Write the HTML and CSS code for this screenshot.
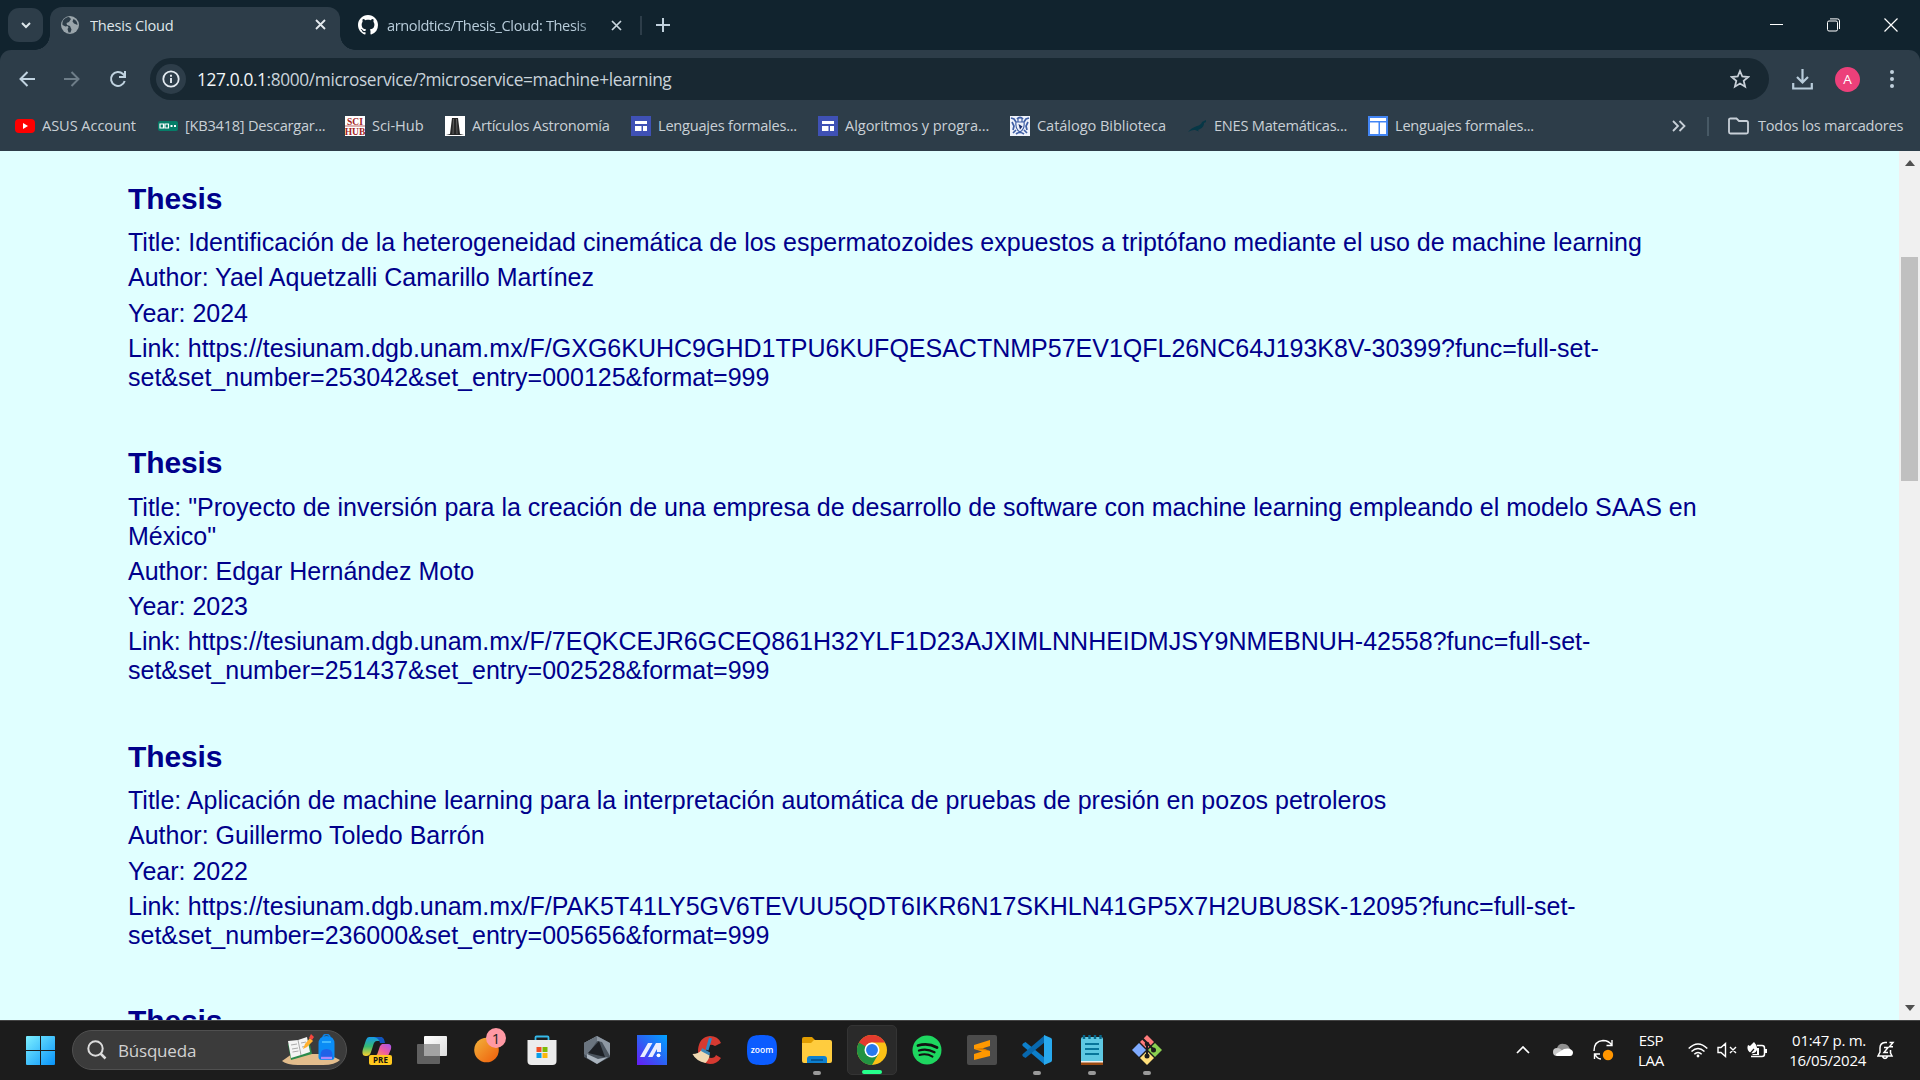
FILE: index.html
```
<!DOCTYPE html>
<html lang="es">
<head>
<meta charset="utf-8">
<title>Thesis Cloud</title>
<link rel="stylesheet" href="styles.css">
</head>
<body>
<div class="screen">
  <header class="browser">
    <div class="tabstrip">
      <button class="tab-search" aria-label="Buscar pestañas"><svg width="12" height="10" viewBox="0 0 12 10"><path d="M2 3l4 4 4-4" fill="none" stroke="#dde6ea" stroke-width="2"/></svg></button>
      <div class="tab active">
        <svg width="18" height="18" viewBox="0 0 18 18"><circle cx="9" cy="9" r="9" fill="#9aa5ab"/><path d="M8 1C3 1.500 1 5 1.500 9l3 1.500 2-.5 1 1.500-1 1.500 1 3.500h2l1-3-1.500-3.500-3-1-.5-2 2.500-1 2-3zM12.500 3l-1 2.500 1.500 2 3.500 1.500c0-3-1.500-5-4-6z" fill="#2d3d49"/></svg>
        <span class="tab-title t1">Thesis Cloud</span>
        <svg class="tab-close" width="11" height="11" viewBox="0 0 11 11"><path d="M1 1l9 9M10 1l-9 9" stroke="#e4eaee" stroke-width="1.800"/></svg>
      </div>
      <div class="tab idle">
        <svg width="20" height="20" viewBox="0 0 16 16"><path fill="#fff" d="M8 0C3.580 0 0 3.580 0 8c0 3.540 2.290 6.530 5.470 7.590.4.070.55-.17.55-.38 0-.19-.01-.82-.01-1.490-2.010.37-2.530-.49-2.690-.94-.09-.23-.48-.94-.82-1.130-.28-.15-.68-.52-.01-.53.63-.01 1.080.58 1.230.82.72 1.210 1.870.87 2.330.66.070-.52.28-.87.51-1.070-1.780-.2-3.640-.89-3.640-3.950 0-.87.31-1.590.82-2.150-.08-.2-.36-1.020.08-2.120 0 0 .67-.21 2.200.82.64-.18 1.320-.27 2-.27s1.360.09 2 .27c1.530-1.040 2.200-.82 2.200-.82.44 1.100.16 1.920.08 2.120.51.56.82 1.270.82 2.150 0 3.070-1.870 3.750-3.650 3.950.29.25.54.73.54 1.480 0 1.070-.01 1.930-.01 2.200 0 .21.15.46.55.38A8 8 0 0 0 16 8c0-4.420-3.580-8-8-8z"/></svg>
        <span class="tab-title t2">arnoldtics/Thesis_Cloud: Thesis</span>
        <svg class="tab-close" width="11" height="11" viewBox="0 0 11 11"><path d="M1 1l9 9M10 1l-9 9" stroke="#c9d6de" stroke-width="1.700"/></svg>
      </div>
      <span class="tab-sep"></span>
      <svg class="new-tab" width="14" height="14" viewBox="0 0 14 14"><path d="M7 0v14M0 7h14" stroke="#c0d0dc" stroke-width="2"/></svg>
      <div class="window-controls">
        <svg width="14" height="14" viewBox="0 0 14 14"><path d="M0 6.500h13" stroke="#fff"/></svg>
        <svg width="14" height="14" viewBox="0 0 14 14" fill="none" stroke="#fff"><rect x=".5" y="3" width="10" height="10" rx="1.500"/><path d="M3 .9h7.500q2 0 2 2V11"/></svg>
        <svg width="14" height="14" viewBox="0 0 14 14"><path d="M.5.5l13 13M13.500.5l-13 13" stroke="#fff" stroke-width="1.200"/></svg>
      </div>
    </div>
    <div class="panel">
      <div class="toolbar">
        <svg class="nav" width="16" height="16" viewBox="0 0 16 16" fill="none" stroke="#c0d3e0" stroke-width="2"><path d="M16 8H2M8.500 1L1.500 8l7 7"/></svg>
        <svg class="nav" width="16" height="16" viewBox="0 0 16 16" fill="none" stroke="#6d7d88" stroke-width="2"><path d="M0 8h14M7.500 1l7 7-7 7"/></svg>
        <svg class="nav" width="18" height="18" viewBox="0 0 18 18" fill="none" stroke="#c0d3e0" stroke-width="2"><path d="M15.700 11A7 7 0 1 1 14 4l2 2"/><path d="M16 1v6h-6"/></svg>
        <div class="omnibox">
          <span class="info"><svg width="18" height="18" viewBox="0 0 18 18"><circle cx="9" cy="9" r="7.700" fill="none" stroke="#e3eaf0" stroke-width="1.800"/><path d="M9 8v5M9 4.800v1.900" stroke="#e3eaf0" stroke-width="1.900"/></svg></span>
          <span class="url"><b>127.0.0.1</b>:8000/microservice/?microservice=machine+learning</span>
          <svg class="star" width="20" height="20" viewBox="0 0 20 20"><path d="M10 2l2.300 5.500 5.900.5-4.500 3.900 1.400 5.800L10 14.600l-5.100 3.100 1.400-5.800L1.800 8l5.900-.5z" fill="none" stroke="#c8d0d8" stroke-width="1.800"/></svg>
        </div>
        <svg class="download" width="21" height="21" viewBox="0 0 21 21" fill="none" stroke="#b8ccda" stroke-width="2.200"><path d="M10.500 0v13M5 8l5.500 5.500L16 8M1.200 14v5.500h18.600V14"/></svg>
        <span class="avatar">A</span>
        <svg class="dots" width="4" height="18" viewBox="0 0 4 18" fill="#c0d0dc"><circle cx="2" cy="2" r="2"/><circle cx="2" cy="9" r="2"/><circle cx="2" cy="16" r="2"/></svg>
      </div>
      <nav class="bookmarks">
        <span class="bm"><svg width="20" height="20" viewBox="0 0 20 20"><rect y="3" width="20" height="14" rx="4" fill="#f00"/><path d="M8 7l5 3-5 3z" fill="#fff"/></svg><em class="loose">ASUS Account</em></span>
        <span class="bm"><svg width="20" height="20" viewBox="0 0 20 20"><rect y="5" width="20" height="10" rx="2" fill="#067d68"/><path d="M2 8h3.500v4H2zM7 8h3.500v4H7z" fill="none" stroke="#fff" stroke-width="1.200"/><path d="M12.500 9h2v2h-2zM16 9h2v2h-2z" fill="#fff"/></svg><em>[KB3418] Descargar...</em></span>
        <span class="bm"><svg width="20" height="20" viewBox="0 0 20 20"><rect width="20" height="20" fill="#fff"/><path d="M0 10h20" stroke="#b66" /><text x="10" y="8.500" class="sci">SCI</text><text x="10" y="19" class="sci">HUB</text></svg><em class="loose">Sci-Hub</em></span>
        <span class="bm"><svg width="20" height="20" viewBox="0 0 20 20"><rect width="20" height="20" fill="#fff"/><path d="M1 19h18l-4-1-2-16H7L5 18z" fill="#262626"/><path d="M8.500 3L8 18M11.500 3l.5 15" stroke="#777" stroke-width=".7"/></svg><em>Artículos Astronomía</em></span>
        <span class="bm"><svg width="20" height="20" viewBox="0 0 20 20"><rect width="20" height="20" fill="#3f51b5"/><path d="M4 5h12v3H4zM4 10h6.500v5H4zM12 10h4v5h-4z" fill="#fff"/></svg><em>Lenguajes formales...</em></span>
        <span class="bm"><svg width="20" height="20" viewBox="0 0 20 20"><rect width="20" height="20" fill="#3f51b5"/><path d="M4 5h12v3H4zM4 10h6.500v5H4zM12 10h4v5h-4z" fill="#fff"/></svg><em class="loose">Algoritmos y progra...</em></span>
        <span class="bm"><svg width="20" height="20" viewBox="0 0 20 20"><rect width="20" height="20" fill="#eef2fa"/><g fill="none" stroke="#3f5fa5"><path d="M1 2l3 1 2 3M19 2l-3 1-2 3M7 3q3-3 6 0M2 6l2 4-1 4M18 6l-2 4 1 4M3 17l3-3M17 17l-3-3M6 18q4-3 8 0" stroke-width="1.700"/><path d="M6 6q-1 7 4 10 5-3 4-10zM8 3v3M12 3v3" stroke-width="1.200"/></g><path d="M8.500 8l4 2.500-2.500 3z" fill="#142b6b"/></svg><em class="loose">Catálogo Biblioteca</em></span>
        <span class="bm"><svg width="20" height="20" viewBox="0 0 20 20"><path d="M1 16q3-4 9-6 4-1 5-4l4-2v2l-2 1q0 4-4 6l-2 1 1 1.500-4-1.500q-3-.5-7 2z" fill="#063746"/></svg><em>ENES Matemáticas...</em></span>
        <span class="bm"><svg width="20" height="20" viewBox="0 0 20 20"><rect width="20" height="20" fill="#4285f4"/><path d="M2 2h16v3H2zM2 6.500h8.500V18H2zM12 6.500h6V18h-6z" fill="#fff"/></svg><em>Lenguajes formales...</em></span>
        <svg class="more" width="14" height="12" viewBox="0 0 14 12" fill="none" stroke="#c8d0d8" stroke-width="1.800"><path d="M1 1l5 5-5 5M7.500 1l5 5-5 5"/></svg>
        <span class="bm-sep"></span>
        <span class="bm folder"><svg width="21" height="20" viewBox="0 0 21 20"><path d="M1 3.500V16q0 1.500 1.500 1.500h16q1.500 0 1.500-1.500V6.500Q20 5 18.500 5H11L8.500 2.500h-6Q1 2.500 1 3.500z" fill="none" stroke="#c8d0d8" stroke-width="1.800"/></svg><em>Todos los marcadores</em></span>
      </nav>
    </div>
  </header>

  <div class="viewport">
    <main class="results">
      <article>
        <h2>Thesis</h2>
        <p>Title: Identificación de la heterogeneidad cinemática de los espermatozoides expuestos a triptófano mediante el uso de machine learning</p>
        <p>Author: Yael Aquetzalli Camarillo Martínez</p>
        <p>Year: 2024</p>
        <p>Link: https://tesiunam.dgb.unam.mx/F/GXG6KUHC9GHD1TPU6KUFQESACTNMP57EV1QFL26NC64J193K8V-30399?func=full-set-<br>set&amp;set_number=253042&amp;set_entry=000125&amp;format=999</p>
      </article>
      <article>
        <h2>Thesis</h2>
        <p>Title: "Proyecto de inversión para la creación de una empresa de desarrollo de software con machine learning empleando el modelo SAAS en México"</p>
        <p>Author: Edgar Hernández Moto</p>
        <p>Year: 2023</p>
        <p>Link: https://tesiunam.dgb.unam.mx/F/7EQKCEJR6GCEQ861H32YLF1D23AJXIMLNNHEIDMJSY9NMEBNUH-42558?func=full-set-<br>set&amp;set_number=251437&amp;set_entry=002528&amp;format=999</p>
      </article>
      <article>
        <h2>Thesis</h2>
        <p>Title: Aplicación de machine learning para la interpretación automática de pruebas de presión en pozos petroleros</p>
        <p>Author: Guillermo Toledo Barrón</p>
        <p>Year: 2022</p>
        <p>Link: https://tesiunam.dgb.unam.mx/F/PAK5T41LY5GV6TEVUU5QDT6IKR6N17SKHLN41GP5X7H2UBU8SK-12095?func=full-set-<br>set&amp;set_number=236000&amp;set_entry=005656&amp;format=999</p>
      </article>
      <article>
        <h2>Thesis</h2>
      </article>
    </main>
    <div class="scrollbar">
      <svg width="10" height="6" viewBox="0 0 10 6"><path d="M0 6l5-6 5 6z" fill="#505050"/></svg>
      <span class="thumb"></span>
      <svg class="down" width="10" height="6" viewBox="0 0 10 6"><path d="M0 0l5 6 5-6z" fill="#505050"/></svg>
    </div>
  </div>

  <footer class="taskbar">
    <svg class="start" width="29" height="29" viewBox="0 0 29 29"><defs><linearGradient id="win" gradientUnits="userSpaceOnUse" x1="0" y1="0" x2="29" y2="29"><stop offset="0" stop-color="#7df0ff"/><stop offset="1" stop-color="#0893fa"/></linearGradient></defs><path d="M0 1q0-1 1-1h13v14H0zM15 0h13q1 0 1 1v13H15zM0 15h14v14H1q-1 0-1-1zM15 15h14v13q0 1-1 1H15z" fill="url(#win)"/></svg>
    <div class="search">
      <svg width="20" height="20" viewBox="0 0 20 20" fill="none" stroke="#dcdcdc"><circle cx="8.500" cy="8.500" r="7.200" stroke-width="2"/><path d="M13.500 13.500l5 5" stroke-width="2.500"/></svg>
      <span>Búsqueda</span>
      <svg class="hero" width="58" height="32" viewBox="0 0 58 32"><path d="M0 27l10-7h36l12 6q-5 5-17 5H16Q5 31 0 27z" fill="#e3bd8c"/><path d="M6 10l3 16 21-6-3-14z" fill="#2b8a4b"/><path d="M6 7l10-1 9-3 3 15-9 3-10 3z" fill="#f4f4f4"/><path d="M16 6l3 15M9 11l6-1M10 15l6-1M10.500 18l6-1M19 9l5-1M20 13l5-1" stroke="#aaa" fill="none"/><path d="M21 15l2-5 5-6 3 3-6 6z" fill="#ffb02e"/><path d="M27 4l2-4 3 3-2 3z" fill="#f8463e"/><path d="M41 4q0-3.500 3.500-3.500T48 4" fill="none" stroke="#1280dd" stroke-width="1.600"/><path d="M36.500 10q0-8 8-8t8 8v13q0 3-3 3h-10q-3 0-3-3z" fill="#0a8cf5"/><path d="M38.500 21q0-6 6-6t6 6v4h-12z" fill="#1f62e8"/><path d="M40 8h9" stroke="#53c6ff" stroke-width="1.500"/><path d="M39 24h11" stroke="#af88f8" stroke-width="2.400"/></svg>
    </div>
    <div class="apps">
      <span class="app"><svg width="30" height="30" viewBox="0 0 30 30"><defs><linearGradient id="cpa" x1="0" y1="0" x2="0" y2="1"><stop offset="0" stop-color="#1699e8"/><stop offset=".5" stop-color="#37bb72"/><stop offset="1" stop-color="#ffd12c"/></linearGradient><linearGradient id="cpb" x1="1" y1="0" x2="0" y2="1"><stop offset="0" stop-color="#a454ef"/><stop offset=".5" stop-color="#ed5aa1"/><stop offset="1" stop-color="#ff9f4c"/></linearGradient></defs><path d="M7 2h11q3 0 4 4l-7 0q-3 0-4 5l-2 6q-1 4-5 4-5 0-3-7l3-9q1-3 3-3z" fill="url(#cpa)"/><path d="M12 2h7q3 0 4 6h-5q-1-5-6-6z" fill="#1154bf"/><path d="M20 9h6q4 0 3 5l-3 7H12q3 0 4-4l2-6z" fill="url(#cpb)"/><rect x="7" y="20" width="23" height="10" rx="2" fill="#ffc81e"/><text x="18.500" y="28" class="pre">PRE</text></svg></span>
      <span class="app"><svg width="30" height="30" viewBox="0 0 30 30"><defs><linearGradient id="tv" x1="0" y1="0" x2="1" y2="1"><stop offset="0" stop-color="#fff"/><stop offset="1" stop-color="#ddd"/></linearGradient></defs><rect x="7" y="1" width="23" height="20" rx="1" fill="url(#tv)"/><rect y="9" width="23" height="20" rx="1" fill="#606060"/><path d="M7 9h16v12H7z" fill="#a3a3a3"/></svg></span>
      <span class="app"><svg width="30" height="30" viewBox="0 0 30 30"><defs><linearGradient id="or" x1="0" y1="0" x2="1" y2="1"><stop offset="0" stop-color="#f2b33b"/><stop offset="1" stop-color="#ef5c0a"/></linearGradient></defs><circle cx="14.500" cy="15" r="12.300" fill="url(#or)"/></svg><i class="badge">1</i></span>
      <span class="app"><svg width="30" height="30" viewBox="0 0 30 30"><path d="M8.500 6V2.500q0-1 1-1h11q1 0 1 1V6" fill="none" stroke="#35b9e9" stroke-width="1.800"/><path d="M.5 5h29v21q0 4-4 4h-21q-4 0-4-4z" fill="#ececec"/><path d="M9.500 12h5v5h-5z" fill="#f04e24"/><path d="M15.500 12h5v5h-5z" fill="#7eba03"/><path d="M9.500 18h5v5h-5z" fill="#089fe8"/><path d="M15.500 18h5v5h-5z" fill="#fcb70b"/></svg></span>
      <span class="app"><svg width="30" height="30" viewBox="0 0 30 30"><path d="M15 1l13 7v14l-13 7-13-7V8z" fill="#4a535d"/><path d="M15 1L2 8v6L15 6l5 1 8 14V8z" fill="#8e98a3"/><path d="M2 8l13-7v5L5 21l-3-2z" fill="#6a747f"/><path d="M17 6L6 18l17 4z" fill="#1d2025"/><path d="M5 19l11 5 10-2-11 7-10-6z" fill="#a9b3bd"/></svg></span>
      <span class="app"><svg width="30" height="30" viewBox="0 0 30 30"><defs><linearGradient id="ma" x1="0" y1="1" x2="1" y2="0"><stop offset="0" stop-color="#681bf5"/><stop offset=".5" stop-color="#2a63f4"/><stop offset="1" stop-color="#00a3ff"/></linearGradient></defs><path d="M0 0h30v30H0z" fill="url(#ma)"/><path d="M3 22L11 8h4.500L7.500 22zM11 22l8-14h5v9h-4V14l-4.500 8z" fill="#e9edff"/><circle cx="21.500" cy="20.300" r="1.900" fill="#fff"/></svg></span>
      <span class="app"><svg width="30" height="30" viewBox="0 0 30 30"><path d="M29 8l-6 3q-7-4-9 4-1 7 5 8 4 0 5-3l5 3q-4 6-11 6Q6 28 6 15 7 2 18 1q8 0 11 7z" fill="#d63a31"/><path d="M18.500 3L15 15" stroke="#2c86c4" stroke-width="3"/><path d="M.5 19q6 0 9-4l8 5q0 4-4 8Q4 26 .5 19z" fill="#f0d9b2"/><path d="M10 13l8 4.500-.5 3L9 16z" fill="#3c87b8"/></svg></span>
      <span class="app"><svg width="30" height="30" viewBox="0 0 30 30"><path d="M15 0c12 0 15 3 15 15s-3 15-15 15S0 27 0 15 3 0 15 0z" fill="#0b5cff"/><text x="15" y="17.500" class="zoom">zoom</text></svg></span>
      <span class="app run"><svg width="30" height="30" viewBox="0 0 30 30"><path d="M0 4q0-2 2-2h8l3 3v6H0z" fill="#e09c00"/><path d="M0 8h9l3-3h16q2 0 2 2v19q0 2-2 2H2q-2 0-2-2z" fill="#ffcc3e"/><path d="M5 28v-4q0-3 3-3h14q3 0 3 3v4z" fill="#0d80d0"/><path d="M9 25h12" stroke="#034b86" stroke-width="1.500"/></svg></span>
      <span class="app current"><svg width="30" height="30" viewBox="0 0 48 48"><circle cx="24" cy="24" r="24" fill="#fbc116"/><path d="M3.200 12A24 24 0 0 0 24 48l10.400-18L24 24z" fill="#229342"/><path d="M3.200 12A24 24 0 0 1 44.800 12H24a12 12 0 0 0-12 12z" fill="#e33b2e"/><path d="M3.200 12L13.600 30l3-10z" fill="#229342"/><circle cx="24" cy="24" r="12" fill="#fff"/><circle cx="24" cy="24" r="9.500" fill="#2879ec"/></svg></span>
      <span class="app"><svg width="30" height="30" viewBox="0 0 30 30" fill="none" stroke="#111" stroke-linecap="round"><circle cx="15" cy="15" r="14.500" fill="#1ed760" stroke="none"/><path d="M6 10.500q10-3 19 2" stroke-width="2.800"/><path d="M7 15.500q8-2.500 15.500 1.800" stroke-width="2.300"/><path d="M7.500 20q7-2 13 1.600" stroke-width="2"/></svg></span>
      <span class="app"><svg width="30" height="30" viewBox="0 0 30 30"><rect width="30" height="30" rx="2" fill="#4b4b4b"/><path d="M7 10l16-5v6l-8 2.500 8 2.500v5L7 25v-6l8-2.500L7 14z" fill="#ff9800"/><path d="M7 14l16 2-8-3z" fill="#d87b00"/></svg></span>
      <span class="app run"><svg width="30" height="30" viewBox="0 0 30 30"><path d="M1 8.500L3.500 7 23 23v7L.8 11q-1-1 .2-2.500z" fill="#0d7fcb"/><path d="M1 21.500L3.500 23 23 7V0L.8 19q-1 1 .2 2.500z" fill="#0868ae"/><path d="M22 0l7 3q1 .5 1 2v20q0 1.500-1 2l-7 3z" fill="#28a9ee"/></svg></span>
      <span class="app run"><svg width="30" height="30" viewBox="0 0 30 30"><path d="M4 26h22v4H4z" fill="#9c4a10"/><path d="M4 24h22v3.500H4z" fill="#eee"/><path d="M4 4q0-2 2-2h18q2 0 2 2v22H4z" fill="#5ec8e2"/><path d="M8 9h14M8 14h14M8 19h14" stroke="#08759a" stroke-width="1.800"/><path d="M7 0v4M12.500 0v4M18 0v4M23.500 0v4" stroke="#08688c" stroke-width="2.400"/></svg></span>
      <span class="app run"><svg width="30" height="30" viewBox="0 0 30 30"><path d="M15 0l7 7-7 7-7-7z" fill="#ff7b7b"/><path d="M7 8l7 7-7 7-7-7z" fill="#7fabff"/><path d="M23 8l7 7-7 7-7-7z" fill="#8bd150"/><path d="M15 16l7 7-7 7-7-7z" fill="#ffdf7a"/><path d="M10 3l5 5v13M15 8l6 6" fill="none" stroke="#1c1c1c" stroke-width="2"/><g fill="#1c1c1c"><circle cx="15" cy="9" r="2.300"/><circle cx="15" cy="21" r="2.500"/><circle cx="21.500" cy="15" r="2.500"/></g></svg></span>
    </div>
    <div class="tray">
      <svg width="14" height="8" viewBox="0 0 14 8"><path d="M1 7l6-6 6 6" fill="none" stroke="#fff" stroke-width="1.700"/></svg>
      <svg class="cloud" width="20" height="14" viewBox="0 0 20 14"><path d="M4 5q2-5 7-4 4 0 6 5l-7 3z" fill="#909090"/><path d="M4 13q-4 0-4-4t4-4q4 0 6 4l-3 4z" fill="#c9c9c9"/><path d="M4 13q-2-1-1-2l8-5q7-2 9 3 0 4-3 4z" fill="#fff"/></svg>
      <svg class="sync" width="21" height="22" viewBox="0 0 21 22" fill="none" stroke="#fff" stroke-width="1.400"><path d="M1 12Q1 2 10 1.500q6 0 9 5M19 1v5.500h-5.500M8 20q-4 0-6-5M1.500 20v-5H7"/><circle cx="15" cy="16" r="5.200" fill="#ff9500" stroke="none"/></svg>
      <span class="lang">ESP<br>LAA</span>
      <svg class="wifi" width="20" height="16" viewBox="0 0 20 16" fill="none" stroke="#fff" stroke-width="1.500"><path d="M.7 6.500q9.300-9 18.600 0M3.500 9.500q6.500-6 13 0M6.300 12.300q3.700-3.500 7.400 0"/><circle cx="10" cy="14" r="1.400" fill="#fff" stroke="none"/></svg>
      <svg class="speaker" width="20" height="16" viewBox="0 0 20 16" fill="none" stroke="#fff" stroke-width="1.400"><path d="M1 5.500h3l4.500-4v13L4 10.500H1zM13 5l6 6M19 5l-6 6"/></svg>
      <svg class="battery" width="20" height="18" viewBox="0 0 20 18"><path d="M10 4.500h5q2.500 0 2.500 2.500v6q0 2.500-2.500 2.500H4" fill="none" stroke="#fff" stroke-width="1.500"/><path d="M19 8v4" stroke="#fff" stroke-width="2"/><path d="M7 1q4 4 3 8-2 4-6 3-5-3-3-8l2 1zM6 13h4V7h2v7H5z" fill="#fff"/><path d="M1 15l6-7" stroke="#1c1c1c" stroke-width="1.200"/></svg>
      <span class="clock">01:47 p. m.<br>16/05/2024</span>
      <svg class="bell" width="18" height="19" viewBox="0 0 18 19" fill="none" stroke="#fff" stroke-width="1.500"><path d="M10 1.500H8Q3 2 3 7v4l-2 4h14l-1.500-3V9M5.500 15.500q2.500 4 5 0M7 6.500h4l-4 5h4M12.500 1.500H16l-3.500 4.300H16"/></svg>
    </div>
  </footer>
</div>
</body>
</html>
```
FILE: styles.css
```
* { box-sizing: border-box; }
body { margin: 0; overflow: hidden; background: #1c1c1c; }
svg { display: block; flex: none; }
.screen { width: 1920px; height: 1080px; display: flex; flex-direction: column; overflow: hidden; font-family: "Open Sans", "Noto Sans", sans-serif; }

/* browser chrome */
.browser { height: 151px; flex: none; background: #11232e; color: #dfe6ea; }
.tabstrip { height: 50px; display: flex; align-items: center; padding-left: 8px; }
.tab-search { width: 35px; height: 34px; border: 0; border-radius: 11px; background: #2d3d49; display: grid; place-items: center; padding: 0; }
.tab { display: flex; align-items: center; }
.tab.active { position: relative; align-self: flex-end; width: 290px; height: 43px; margin-left: 7px; padding: 0 14px 8px 11px; background: #2d3d49; border-radius: 12px 12px 0 0; }
.tab.active::before, .tab.active::after { content: ""; position: absolute; bottom: 0; width: 15px; height: 15px; }
.tab.active::before { left: -15px; background: radial-gradient(circle at 0 0, transparent 14.500px, #2d3d49 15px); }
.tab.active::after { right: -15px; background: radial-gradient(circle at 100% 0, transparent 14.500px, #2d3d49 15px); }
.tab-title { font-size: 14.600px; white-space: nowrap; overflow: hidden; line-height: 24px; }
.t1 { margin-left: 11px; letter-spacing: -.22px; }
.t2 { width: 206px; margin-left: 9px; letter-spacing: -.4px; color: #b8ccda; -webkit-mask-image: linear-gradient(90deg, #000 92%, rgba(0,0,0,.5) 100%); mask-image: linear-gradient(90deg, #000 92%, rgba(0,0,0,.5) 100%); }
.tab.active .tab-close { margin-left: auto; }
.tab.idle { width: 282px; padding-left: 18px; }
.tab.idle .tab-close { margin-left: 21px; }
.tab-sep { width: 2px; height: 19px; margin-left: 18px; background: #2d3d49; }
.new-tab { margin-left: 14px; }
.window-controls { margin-left: auto; padding-right: 22px; display: flex; gap: 43px; }

.panel { height: 101px; background: #2d3d49; border-radius: 11px 11px 0 0; }
.toolbar { height: 58px; padding: 0 26px 0 19px; display: flex; align-items: center; }
.nav + .nav { margin-left: 29px; }
.omnibox { width: 1619px; height: 42px; margin-left: 23px; padding: 0 19px 0 6px; border-radius: 21px; background: #182832; display: flex; align-items: center; }
.info { width: 30px; height: 30px; border-radius: 50%; background: #2d3d49; display: grid; place-items: center; }
.url { margin-left: 11px; font-size: 17.300px; letter-spacing: -.37px; color: #c9d3da; white-space: nowrap; }
.url b { font-weight: 400; color: #f2f6f8; }
.star { margin-left: auto; }
.download { margin-left: 23px; }
.avatar { width: 25px; height: 25px; margin-left: 22px; border-radius: 50%; background: #ec407a; color: #fff; font-size: 13.500px; line-height: 25px; text-align: center; }
.dots { margin-left: auto; }
.bookmarks { height: 36px; padding-left: 15px; display: grid; align-items: center; grid-template-columns: 143px 187px 100px 186px 187px 192px 177px 181px 304px 35px 21px auto; }
.bm { display: flex; align-items: center; gap: 7px; white-space: nowrap; }
.bm em { margin-top: -2px; font-style: normal; font-size: 14.600px; letter-spacing: -.24px; color: #c9d0d6; }
.bm em.loose { letter-spacing: -.07px; }
.bm.folder { gap: 9px; }
.bm-sep { width: 2px; height: 19px; background: #475965; }
.sci { font: 700 9.500px "Liberation Serif", serif; fill: #a32222; text-anchor: middle; }

/* page */
.viewport { flex: 1; min-height: 0; display: flex; background: #e0ffff; overflow: hidden; }
.results { flex: 1; padding: 30.500px 128px 0; color: #00008b; font-family: "Liberation Sans", Arial, sans-serif; }
.results article { margin-bottom: 54.250px; }
.results h2 { margin: 0 0 12.500px; font-size: 30px; line-height: 34px; letter-spacing: -.1px; }
.results p { margin: 0 0 6.250px; font-size: 25px; line-height: 29px; }
.results p:last-child { margin-bottom: 0; }
.scrollbar { width: 21px; background: #f0f0f0; display: flex; flex-direction: column; align-items: center; padding: 9px 0; }
.thumb { width: 17px; height: 224px; margin-top: 91px; background: #c0c0c0; }
.down { margin-top: auto; }

/* taskbar */
.taskbar { height: 60px; flex: none; border-top: 1px solid #444; background: #1c1c1c; display: flex; align-items: center; padding: 0 0 1px 26px; color: #fff; }
.search { width: 275px; height: 40px; margin-left: 17px; padding: 0 6px 0 14px; border: 1px solid #505050; border-radius: 20px; background: #3b3b3b; display: flex; align-items: center; }
.search span { margin-left: 11px; font-size: 17px; letter-spacing: -.2px; color: #d2d2d2; }
.hero { margin-left: auto; }
.apps { display: flex; gap: 5px; margin-left: 5px; }
.app { position: relative; width: 50px; height: 50px; display: grid; place-items: center; border-radius: 5px; }
.current { background: #2a2a2a; border: 1px solid #343434; }
.run::after, .current::after { content: ""; position: absolute; left: 21px; bottom: 0; width: 8px; height: 4px; border-radius: 2px; background: #999; }
.current::after { left: 14px; width: 20px; background: #26ff8c; }
.badge { position: absolute; left: 24px; top: 3px; width: 20px; height: 20px; border-radius: 50%; background: #ff99a4; color: #222; font: 15px/20px "Open Sans", sans-serif; text-align: center; }
.pre { font: 700 8px "Open Sans", sans-serif; text-anchor: middle; fill: #111; }
.zoom { font: 600 8.500px "Open Sans", sans-serif; text-anchor: middle; fill: #fff; }
.tray { margin-left: auto; padding-right: 25px; display: flex; align-items: center; font-size: 15px; line-height: 20px; white-space: nowrap; }
.cloud { margin-left: 23px; }
.sync { margin-left: 20px; }
.lang { width: 34px; margin-left: 20px; text-align: center; letter-spacing: -.3px; }
.wifi { margin-left: 20px; }
.speaker { margin-left: 9px; }
.battery { margin-left: 10px; }
.clock { width: 90px; margin-left: 9px; text-align: right; letter-spacing: -.28px; }
.bell { margin-left: 11px; }
```
